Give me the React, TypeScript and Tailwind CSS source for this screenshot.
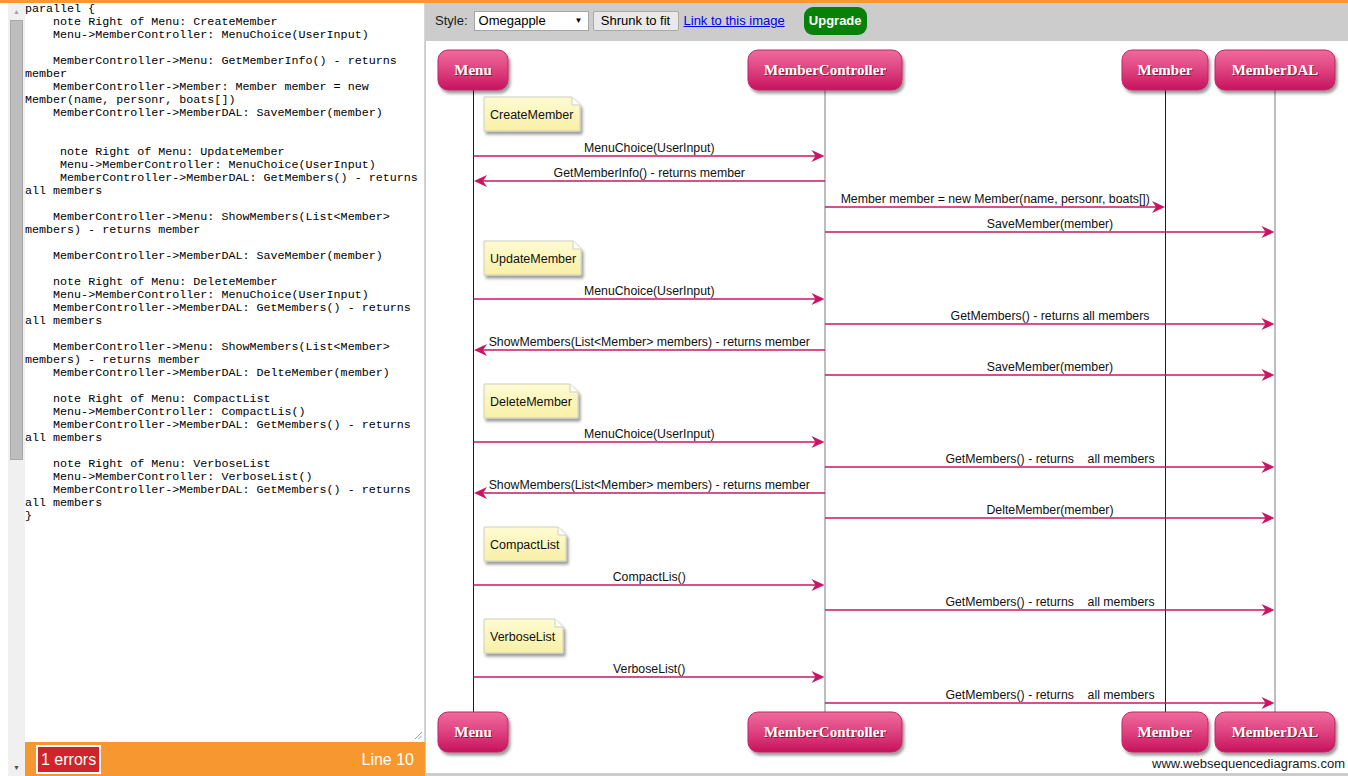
import { FC } from "react"

const SOURCE = `parallel {
    note Right of Menu: CreateMember
    Menu->MemberController: MenuChoice(UserInput)

    MemberController->Menu: GetMemberInfo() - returns member
    MemberController->Member: Member member = new Member(name, personr, boats[])
    MemberController->MemberDAL: SaveMember(member)


     note Right of Menu: UpdateMember
     Menu->MemberController: MenuChoice(UserInput)
     MemberController->MemberDAL: GetMembers() - returns all members

    MemberController->Menu: ShowMembers(List<Member> members) - returns member

    MemberController->MemberDAL: SaveMember(member)

    note Right of Menu: DeleteMember
    Menu->MemberController: MenuChoice(UserInput)
    MemberController->MemberDAL: GetMembers() - returns all members

    MemberController->Menu: ShowMembers(List<Member> members) - returns member
    MemberController->MemberDAL: DelteMember(member)

    note Right of Menu: CompactList
    Menu->MemberController: CompactLis()
    MemberController->MemberDAL: GetMembers() - returns all members

    note Right of Menu: VerboseList
    Menu->MemberController: VerboseList()
    MemberController->MemberDAL: GetMembers() - returns all members
}`

const participants = [
  { name: "Menu", x: 438, w: 70, cx: 473.5, line: "#1c1c1c" },
  { name: "MemberController", x: 748, w: 154, cx: 825, line: "#7c7c7c" },
  { name: "Member", x: 1122, w: 86, cx: 1165.5, line: "#1c1c1c" },
  { name: "MemberDAL", x: 1215, w: 120, cx: 1275, line: "#7c7c7c" },
]

const notes = [
  { text: "CreateMember", y: 97, w: 96 },
  { text: "UpdateMember", y: 241, w: 97 },
  { text: "DeleteMember", y: 384, w: 94 },
  { text: "CompactList", y: 527, w: 82 },
  { text: "VerboseList", y: 619, w: 79 },
]

const messages: [number, number, number, string][] = [
  [0, 1, 156, "MenuChoice(UserInput)"],
  [1, 0, 181, "GetMemberInfo() - returns member"],
  [1, 2, 207, "Member member = new Member(name, personr, boats[])"],
  [1, 3, 232, "SaveMember(member)"],
  [0, 1, 299, "MenuChoice(UserInput)"],
  [1, 3, 324, "GetMembers() - returns all members"],
  [1, 0, 350, "ShowMembers(List<Member> members) - returns member"],
  [1, 3, 375, "SaveMember(member)"],
  [0, 1, 442, "MenuChoice(UserInput)"],
  [1, 3, 467, "GetMembers() - returns    all members"],
  [1, 0, 493, "ShowMembers(List<Member> members) - returns member"],
  [1, 3, 518, "DelteMember(member)"],
  [0, 1, 585, "CompactLis()"],
  [1, 3, 610, "GetMembers() - returns    all members"],
  [0, 1, 677, "VerboseList()"],
  [1, 3, 703, "GetMembers() - returns    all members"],
]

const SANS = "Liberation Sans, Arial, sans-serif"
const SERIF = "Liberation Serif, Times New Roman, serif"

const Participant: FC<{ p: (typeof participants)[number]; y: number }> = ({ p, y }) => (
  <g>
    <rect x={p.x} y={y} width={p.w} height={40} rx={10} fill="url(#pink)" stroke="#c0256a" strokeWidth={1} filter="url(#shadow)" />
    <text x={p.x + p.w / 2 + 1} y={y + 26} textAnchor="middle" fontFamily={SERIF} fontWeight="bold" fontSize={15} fill="#5a0828" opacity={0.7}>
      {p.name}
    </text>
    <text x={p.x + p.w / 2} y={y + 25} textAnchor="middle" fontFamily={SERIF} fontWeight="bold" fontSize={15} fill="#ffffff">
      {p.name}
    </text>
  </g>
)

const Diagram = () => (
  <svg width={922} height={732} viewBox="426 41 922 732" className="block">
    <defs>
      <linearGradient id="pink" x1="0" y1="0" x2="0" y2="1">
        <stop offset="0" stopColor="#ef6b9b" />
        <stop offset="0.45" stopColor="#e04683" />
        <stop offset="1" stopColor="#c7135d" />
      </linearGradient>
      <linearGradient id="note" x1="0" y1="0" x2="0" y2="1">
        <stop offset="0" stopColor="#fefbd2" />
        <stop offset="1" stopColor="#f8f0a6" />
      </linearGradient>
      <filter id="shadow" x="-20%" y="-20%" width="150%" height="160%">
        <feDropShadow dx="2" dy="3" stdDeviation="1.8" floodColor="#000" floodOpacity="0.4" />
      </filter>
    </defs>

    {participants.map((p) => (
      <line key={p.name} x1={p.cx} y1={90} x2={p.cx} y2={712} stroke={p.line} strokeWidth={1} />
    ))}

    {notes.map((n) => (
      <g key={n.text}>
        <path
          d={`M484 ${n.y} h${n.w - 8} l8 8 v26 h-${n.w} z`}
          fill="url(#note)"
          stroke="#cfcfc0"
          strokeWidth={1}
          filter="url(#shadow)"
        />
        <path d={`M${484 + n.w - 8} ${n.y} v8 h8`} fill="#ffffff" stroke="#cfcfc0" strokeWidth={1} />
        <text x={490} y={n.y + 21.5} fontFamily={SANS} fontSize={12.5} fill="#111">
          {n.text}
        </text>
      </g>
    ))}

    {messages.map(([from, to, y, label], i) => {
      const a = participants[from].cx
      const b = participants[to].cx
      const dir = b > a ? 1 : -1
      const tip = b - dir * 0.5
      return (
        <g key={i}>
          <line x1={a} y1={y} x2={tip - dir * 8} y2={y} stroke="#cc1463" strokeWidth={1.5} />
          <polygon
            points={`${tip},${y} ${tip - dir * 13},${y - 6} ${tip - dir * 9},${y} ${tip - dir * 13},${y + 6}`}
            fill="#cc1463"
          />
          <text
            x={(a + b) / 2}
            y={y - 4}
            textAnchor="middle"
            fontFamily={SANS}
            fontSize={12.3}
            fill="#111"
            className="whitespace-pre"
          >
            {label}
          </text>
        </g>
      )
    })}

    {participants.map((p) => (
      <Participant key={"t" + p.name} p={p} y={50} />
    ))}
    {participants.map((p) => (
      <Participant key={"b" + p.name} p={p} y={712} />
    ))}

    <text x={1345} y={768} textAnchor="end" fontFamily={SANS} fontSize={13} fill="#1a1a1a">
      www.websequencediagrams.com
    </text>
  </svg>
)

const Editor = () => (
  <div className="flex w-[425px] shrink-0">
    <div className="w-2 bg-white" />
    <div className="flex w-[17px] flex-col items-center bg-[#f0f0f0]">
      <div className="flex h-[17px] w-full items-center justify-center text-[7px] leading-none text-[#a3a3a3]">▲</div>
      <div className="h-[440px] w-[13px] border border-[#a8a8a8] bg-[#bdbdbd]" />
      <div className="flex-1" />
      <div className="flex h-[17px] w-full items-center justify-center text-[7px] leading-none text-[#505050]">▼</div>
    </div>
    <div className="flex min-w-0 flex-1 flex-col">
      <div className="relative flex-1 overflow-hidden border-r border-[#d6d6d6] bg-white">
        <pre className="whitespace-pre-wrap font-['Liberation_Mono','Courier_New',monospace] text-[11.7px] leading-[13px] text-black">
          {SOURCE}
        </pre>
        <svg width="8" height="8" className="absolute bottom-[3px] right-[2px]">
          <line x1="1" y1="8" x2="8" y2="1" stroke="#9a9a9a" strokeWidth="1" />
          <line x1="4.5" y1="8" x2="8" y2="4.5" stroke="#9a9a9a" strokeWidth="1" />
        </svg>
      </div>
      <div className="flex h-[34px] items-center justify-between bg-[#f7972f] pl-[11px] pr-[11px] pt-[1px]">
        <div className="flex h-[29px] items-center border-2 border-white bg-[#d1232a] px-[3px] text-[16px] text-white">
          1 errors
        </div>
        <span className="text-[16px] text-white">Line 10</span>
      </div>
    </div>
  </div>
)

const Toolbar = () => (
  <div className="flex h-[38px] shrink-0 items-center bg-[#cccccc] pb-[2px] pl-[10px] text-[13px] text-[#1a1a1a]">
    <span>Style:</span>
    <div className="ml-[6px] flex h-[20px] w-[115px] items-center justify-between border border-[#a6a6a6] bg-white pl-[4px] pr-[5px] text-black">
      <span>Omegapple</span>
      <span className="text-[8px]">▼</span>
    </div>
    <div className="ml-[4px] flex h-[20px] w-[86px] items-center justify-center rounded-[2px] border border-[#a9a9a9] bg-[#e9e9e9] text-black">
      Shrunk to fit
    </div>
    <span className="ml-[5px] text-[#0000ee] underline">Link to this image</span>
    <div className="ml-[19px] flex h-[28px] w-[63px] items-center justify-center rounded-[9px] bg-[#078107] font-bold text-white">
      Upgrade
    </div>
  </div>
)

export default function App() {
  return (
    <div className="flex h-[776px] w-[1348px] flex-col overflow-hidden bg-white font-['Liberation_Sans',Arial,sans-serif]">
      <div className="h-[3px] shrink-0 bg-[#f7972f]" />
      <div className="flex min-h-0 flex-1">
        <Editor />
        <div className="flex min-w-0 flex-1 flex-col">
          <Toolbar />
          <div className="min-h-0 flex-1 overflow-hidden border-l border-[#c8c8c8] bg-white">
            <Diagram />
          </div>
          <div className="h-[3px] shrink-0 bg-[#cccccc]" />
        </div>
      </div>
    </div>
  )
}
